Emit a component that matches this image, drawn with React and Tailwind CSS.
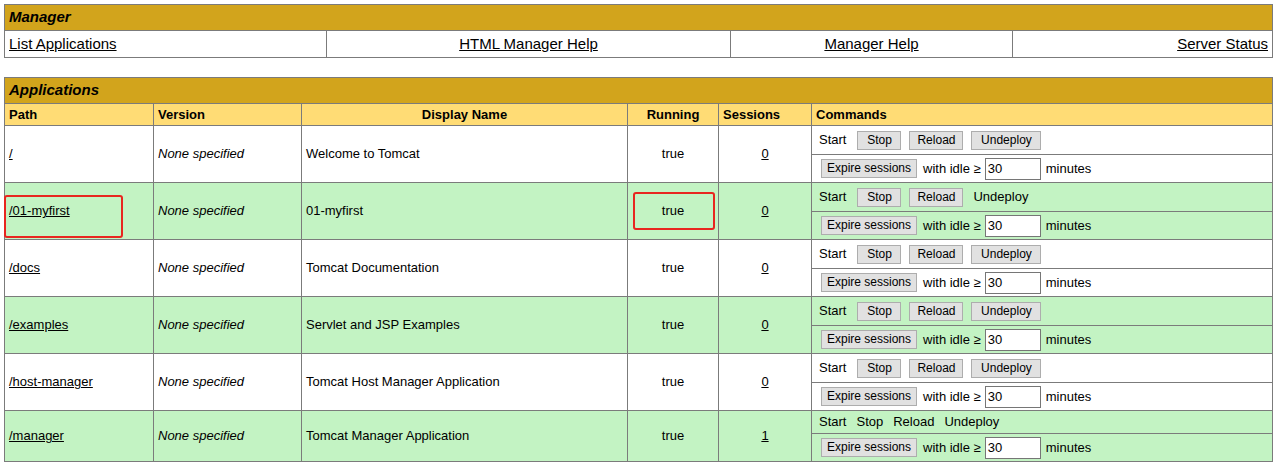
import React from 'react';

const apps = [
  { path: '/', name: 'Welcome to Tomcat', sessions: '0', self: false },
  { path: '/01-myfirst', name: '01-myfirst', sessions: '0', self: false, plainUndeploy: true },
  { path: '/docs', name: 'Tomcat Documentation', sessions: '0' },
  { path: '/examples', name: 'Servlet and JSP Examples', sessions: '0' },
  { path: '/host-manager', name: 'Tomcat Host Manager Application', sessions: '0' },
  { path: '/manager', name: 'Tomcat Manager Application', sessions: '1', self: true },
];

const cell = 'border border-[#7b7b7b] px-[4px] align-middle';

const Btn = ({ children, w }) => (
  <span
    className={`inline-block h-[19px] leading-[17px] text-center bg-[#e1e1e1] border border-[#adadad] text-[12px] text-black ${w}`}
  >
    {children}
  </span>
);

const Commands = ({ app }) => {
  if (app.self) {
    return (
      <div className="flex items-center gap-[10px] pl-[3px]">
        <span>Start</span>
        <span>Stop</span>
        <span>Reload</span>
        <span>Undeploy</span>
      </div>
    );
  }
  return (
    <div className="flex items-center gap-[8px] pl-[3px]">
      <span className="mr-[3px]">Start</span>
      <Btn w="w-[44px]">Stop</Btn>
      <Btn w="w-[54px]">Reload</Btn>
      {app.plainUndeploy ? <span className="ml-[2px]">Undeploy</span> : <Btn w="w-[70px]">Undeploy</Btn>}
    </div>
  );
};

const Expire = () => (
  <div className="flex items-center pl-[5px]">
    <Btn w="w-[96px]">Expire sessions</Btn>
    <span className="ml-[6px]">with idle ≥</span>
    <span className="ml-[4px] inline-block w-[56px] h-[22px] border border-[#767676] bg-white leading-[20px] pl-[2px] text-[13px]">30</span>
    <span className="ml-[5px]">minutes</span>
  </div>
);

export default function App() {
  return (
    <div
      className="min-h-[468px] bg-white text-black text-[13px] pt-[4px] pl-[4px]"
      style={{ fontFamily: '"Liberation Sans", Arial, sans-serif' }}
    >
      <table className="border-collapse table-fixed w-[1268px]">
        <colgroup>
          <col className="w-[322px]" />
          <col className="w-[404px]" />
          <col className="w-[282px]" />
          <col className="w-[260px]" />
        </colgroup>
        <tbody>
          <tr className="h-[26px]">
            <td colSpan={4} className={`${cell} bg-[#D2A41C] text-[15px] font-bold italic`}>Manager</td>
          </tr>
          <tr className="h-[27px] text-[15px]">
            <td className={`${cell} text-left`}><span className="underline">List Applications</span></td>
            <td className={`${cell} text-center`}><span className="underline">HTML Manager Help</span></td>
            <td className={`${cell} text-center`}><span className="underline">Manager Help</span></td>
            <td className={`${cell} text-right`}><span className="underline">Server Status</span></td>
          </tr>
        </tbody>
      </table>

      <div className="h-[19px]" />

      <div className="relative w-[1268px]">
        <table className="border-collapse table-fixed w-[1268px]">
          <colgroup>
            <col className="w-[149px]" />
            <col className="w-[148px]" />
            <col className="w-[326px]" />
            <col className="w-[91px]" />
            <col className="w-[93px]" />
            <col className="w-[461px]" />
          </colgroup>
          <tbody>
            <tr className="h-[26px]">
              <td colSpan={6} className={`${cell} bg-[#D2A41C] text-[15px] font-bold italic`}>Applications</td>
            </tr>
            <tr className="h-[22px] bg-[#FFDC75] font-bold">
              <td className={`${cell} text-left`}>Path</td>
              <td className={`${cell} text-left`}>Version</td>
              <td className={`${cell} text-center`}>Display Name</td>
              <td className={`${cell} text-center`}>Running</td>
              <td className={`${cell} text-left`}>Sessions</td>
              <td className={`${cell} text-left`}>Commands</td>
            </tr>
            {apps.map((app, i) => {
              const bg = i % 2 === 1 ? 'bg-[#C3F3C3]' : 'bg-white';
              const last = i === apps.length - 1;
              return (
                <React.Fragment key={app.path}>
                  <tr className={`${bg} ${last ? 'h-[23px]' : 'h-[29px]'}`}>
                    <td rowSpan={2} className={cell}><span className="underline">{app.path}</span></td>
                    <td rowSpan={2} className={`${cell} italic`}>None specified</td>
                    <td rowSpan={2} className={cell}>{app.name}</td>
                    <td rowSpan={2} className={`${cell} text-center`}>true</td>
                    <td rowSpan={2} className={`${cell} text-center`}><span className="underline">{app.sessions}</span></td>
                    <td className={cell}><Commands app={app} /></td>
                  </tr>
                  <tr className={`${bg} h-[28px]`}>
                    <td className={cell}><Expire /></td>
                  </tr>
                </React.Fragment>
              );
            })}
          </tbody>
        </table>

        {/* annotation boxes */}
        <div className="absolute left-[0px] top-[118px] w-[119px] h-[43px] border-2 border-[#e8261f] rounded-[3px]" />
        <div className="absolute left-[629px] top-[115px] w-[82px] h-[38px] border-2 border-[#e8261f] rounded-[3px]" />
      </div>
    </div>
  );
}
